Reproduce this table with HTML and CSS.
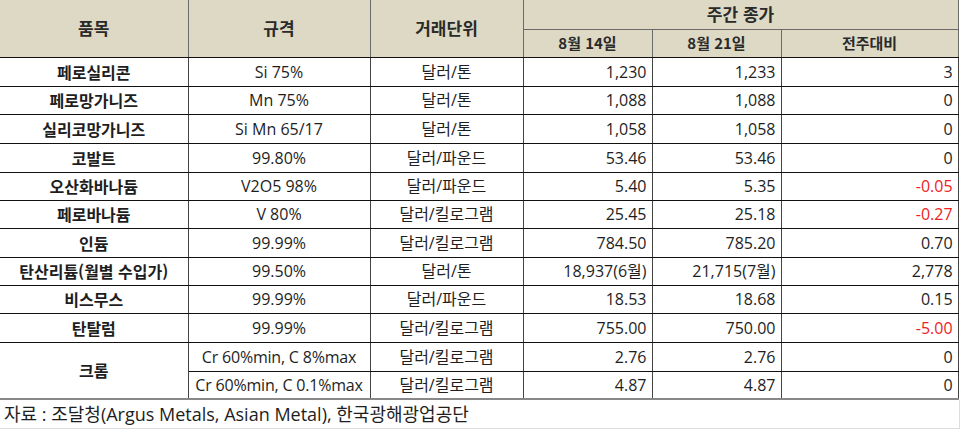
FILE: index.html
```html
<!DOCTYPE html>
<html lang="ko">
<head>
<meta charset="utf-8">
<link rel="stylesheet" href="styles.css">
</head>
<body>
<div class="wrap">
<table class="price">
  <colgroup>
    <col class="c1"><col class="c2"><col class="c3"><col class="c4"><col class="c5"><col class="c6">
  </colgroup>
  <thead>
    <tr class="h1">
      <th rowspan="2" class="big">품목</th>
      <th rowspan="2" class="big">규격</th>
      <th rowspan="2" class="big">거래단위</th>
      <th colspan="3" class="big">주간 종가</th>
    </tr>
    <tr class="h2">
      <th class="sub">8월 14일</th>
      <th class="sub">8월 21일</th>
      <th class="sub">전주대비</th>
    </tr>
  </thead>
  <tbody>
    <tr class="r29"><td class="name">페로실리콘</td><td>Si 75%</td><td>달러/톤</td><td class="num">1,230</td><td class="num">1,233</td><td class="num">3</td></tr>
    <tr class="r28"><td class="name">페로망가니즈</td><td>Mn 75%</td><td>달러/톤</td><td class="num">1,088</td><td class="num">1,088</td><td class="num">0</td></tr>
    <tr class="r29"><td class="name">실리코망가니즈</td><td>Si Mn 65/17</td><td>달러/톤</td><td class="num">1,058</td><td class="num">1,058</td><td class="num">0</td></tr>
    <tr class="r29"><td class="name">코발트</td><td>99.80%</td><td>달러/파운드</td><td class="num">53.46</td><td class="num">53.46</td><td class="num">0</td></tr>
    <tr class="r28"><td class="name">오산화바나듐</td><td>V2O5 98%</td><td>달러/파운드</td><td class="num">5.40</td><td class="num">5.35</td><td class="num neg">-0.05</td></tr>
    <tr class="r28"><td class="name">페로바나듐</td><td>V 80%</td><td>달러/킬로그램</td><td class="num">25.45</td><td class="num">25.18</td><td class="num neg">-0.27</td></tr>
    <tr class="r29"><td class="name">인듐</td><td>99.99%</td><td>달러/킬로그램</td><td class="num">784.50</td><td class="num">785.20</td><td class="num">0.70</td></tr>
    <tr class="r28"><td class="name">탄산리튬(월별 수입가)</td><td>99.50%</td><td>달러/톤</td><td class="num">18,937(6월)</td><td class="num">21,715(7월)</td><td class="num">2,778</td></tr>
    <tr class="r28"><td class="name">비스무스</td><td>99.99%</td><td>달러/파운드</td><td class="num">18.53</td><td class="num">18.68</td><td class="num">0.15</td></tr>
    <tr class="r29"><td class="name">탄탈럼</td><td>99.99%</td><td>달러/킬로그램</td><td class="num">755.00</td><td class="num">750.00</td><td class="num neg">-5.00</td></tr>
    <tr class="r29"><td class="name" rowspan="2">크롬</td><td class="spec">Cr 60%min, C 8%max</td><td>달러/킬로그램</td><td class="num">2.76</td><td class="num">2.76</td><td class="num">0</td></tr>
    <tr class="r28 last"><td class="spec">Cr 60%min, C 0.1%max</td><td>달러/킬로그램</td><td class="num">4.87</td><td class="num">4.87</td><td class="num">0</td></tr>
  </tbody>
</table>
<div class="source">자료 : 조달청(Argus Metals, Asian Metal), 한국광해광업공단</div>
</div>
</body>
</html>
```
FILE: styles.css
```css
html, body {
  margin: 0;
  padding: 0;
  background: #ffffff;
}
body {
  font-family: "Open Sans", "Noto Sans CJK KR", sans-serif;
  color: #1e1e1e;
}
.wrap {
  width: 960px;
}
.price {
  width: 958px;
  border-collapse: collapse;
  table-layout: fixed;
}
.c1 { width: 188px; }
.c2 { width: 182px; }
.c3 { width: 153px; }
.c4 { width: 129px; }
.c5 { width: 129px; }
.c6 { width: 177px; }

.price th, .price td {
  padding: 0;
  border: 1px solid #444444;
  white-space: nowrap;
  overflow: hidden;
  line-height: 20px;
  vertical-align: middle;
}
.price thead th {
  background: #ddd9c4;
  color: #2a2a2a;
  font-weight: 700;
  border-color: #6a6a6a;
  border-top: none;
}
.price tr > :first-child { border-left: none; }
.price thead tr.h1 { height: 29px; }
.price thead tr.h2 { height: 28px; }
.price th.big {
  font-family: "Noto Sans CJK KR", sans-serif;
  font-size: 17px;
}
.price th.sub {
  font-family: "Noto Sans CJK KR", sans-serif;
  font-size: 15px;
  border-bottom: 1px solid #111111;
}
.price thead tr.h1 th[rowspan] { border-bottom: 1px solid #111111; }

.price td {
  font-size: 16px;
  text-align: center;
  border-top-color: #111111;
  border-bottom-color: #111111;
}
.price td.name {
  font-family: "Noto Sans CJK KR", sans-serif;
  font-weight: 700;
  font-size: 16px;
}
.price td.spec { letter-spacing: -0.2px; }
.price td.num {
  text-align: right;
  padding-right: 5px;
}
.price td.neg { color: #ee2222; }
.price tr.r29 { height: 29px; }
.price tr.r28 { height: 28px; }
.price tr.last td { border-bottom: 2px solid #888888; }
.price td[rowspan] { border-bottom: 2px solid #888888; }

.source {
  height: 28px;
  line-height: 28px;
  font-size: 18px;
  padding-left: 4px;
  border-right: 1px solid #dddddd;
  border-bottom: 1px solid #dddddd;
  color: #1e1e1e;
}
```
